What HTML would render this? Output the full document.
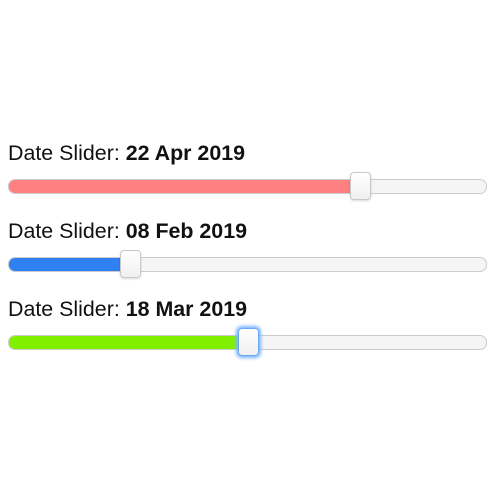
<!DOCTYPE html><html><head><style>
body{margin:0;background:#fff;font-family:"Liberation Sans",Arial,sans-serif;}
.l{position:absolute;left:8px;font-size:21.4px;color:#111;line-height:24px;white-space:nowrap}
.t{position:absolute;left:8px;width:477px;height:13px;border:1px solid #ccc;border-radius:7px;background:#f5f5f5;overflow:hidden}
.f{height:100%;}
.h{position:absolute;width:19px;height:26px;border:1px solid #c8c8c8;border-radius:4px;background:linear-gradient(#fff,#f0f0f0);box-shadow:0 1px 2px rgba(0,0,0,.15)}
</style></head><body>
<div class="l" style="top:141px">Date Slider: <b>22 Apr 2019</b></div>
<div class="t" style="top:179px"><div class="f" style="width:350px;background:#ff8080"></div></div>
<div class="h" style="left:350px;top:172px"></div>
<div class="l" style="top:219px">Date Slider: <b>08 Feb 2019</b></div>
<div class="t" style="top:257px"><div class="f" style="width:120px;background:#2f80f0"></div></div>
<div class="h" style="left:120px;top:250px"></div>
<div class="l" style="top:297px">Date Slider: <b>18 Mar 2019</b></div>
<div class="t" style="top:335px"><div class="f" style="width:235px;background:#80f000"></div></div>
<div class="h" style="left:238px;top:328px;border-color:#6aa8f5;box-shadow:0 0 3px 2px #7ab4ff"></div>
</body></html>
